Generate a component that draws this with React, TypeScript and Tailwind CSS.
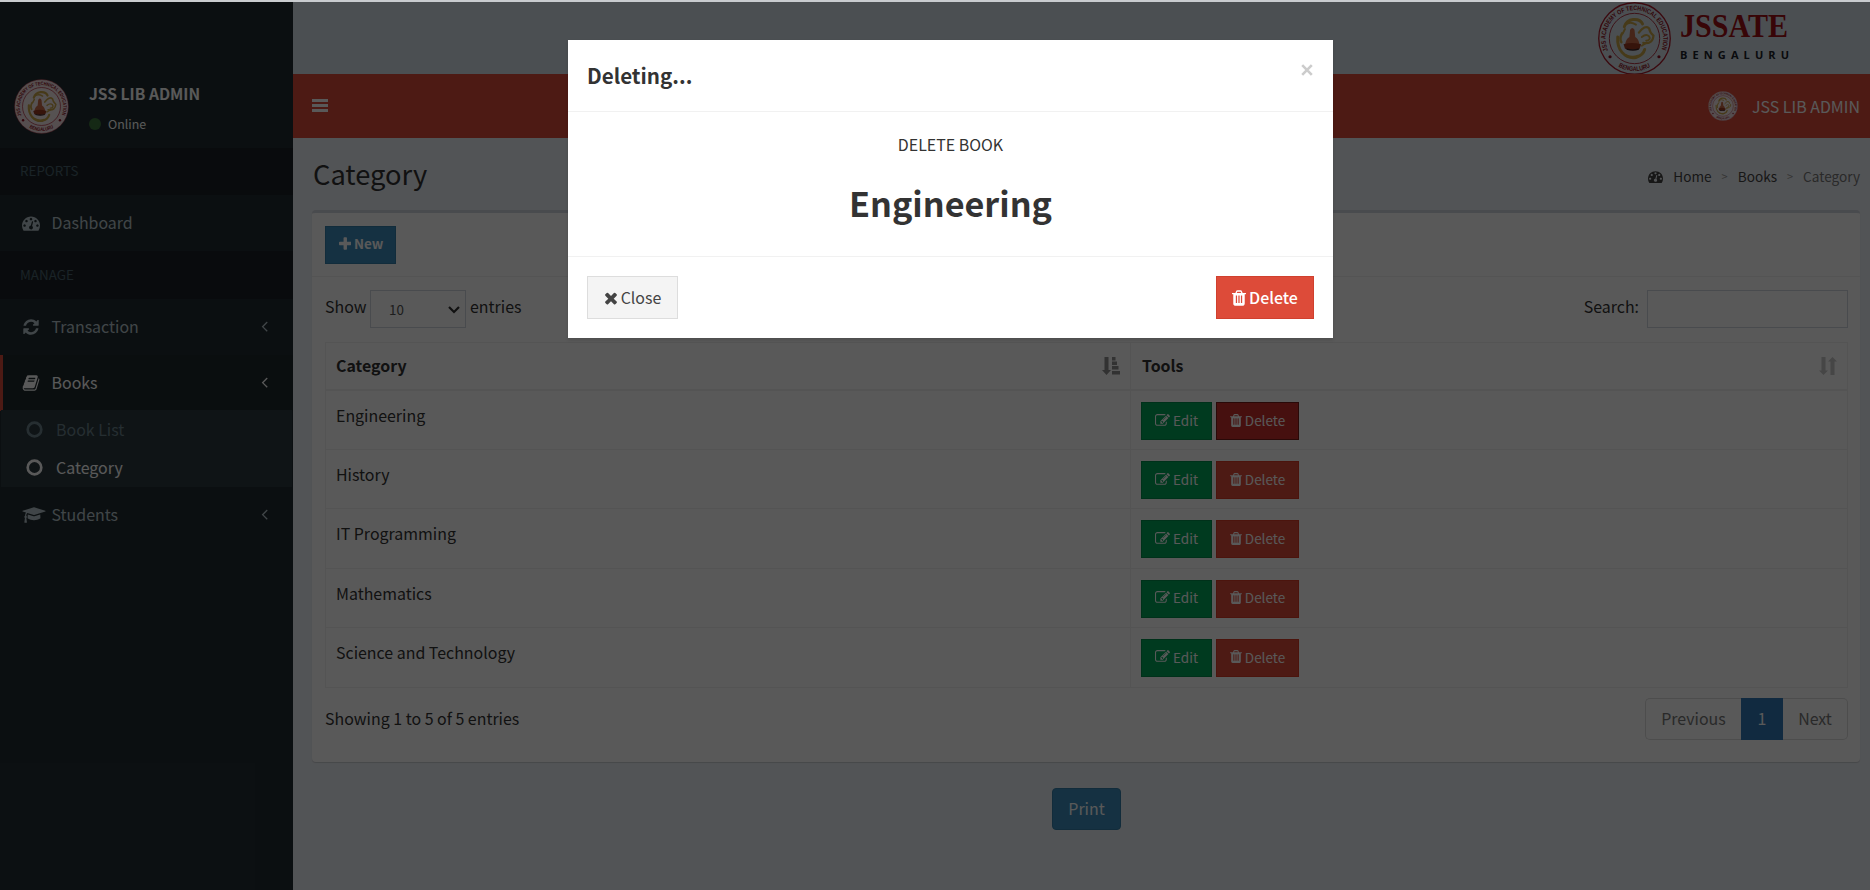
import React from 'react';

type IconProps = { d: string; x?: number; w?: number; className?: string };

const Glyph = ({ d, x = 0, w = 1792, className = '' }: IconProps) => (
  <svg viewBox={`${x} 0 ${w} 1792`} fill="currentColor" className={`shrink-0 ${className}`} aria-hidden="true">
    <path d={d} />
  </svg>
);

const DASHBOARD =
  'M384 1152q0-53-37.5-90.5t-90.5-37.5-90.5 37.5-37.5 90.5 37.5 90.5 90.5 37.5 90.5-37.5 37.5-90.5zm192-448q0-53-37.5-90.5t-90.5-37.5-90.5 37.5-37.5 90.5 37.5 90.5 90.5 37.5 90.5-37.5 37.5-90.5zm428 481l101-382q6-26-7.5-48.5t-38.5-29.5-48 6.5-30 39.5l-101 382q-60 5-107 43.5t-63 98.5q-20 77 20 146t117 89 146-20 89-117q16-60-6-117t-72-91zm660-33q0-53-37.5-90.5t-90.5-37.5-90.5 37.5-37.5 90.5 37.5 90.5 90.5 37.5 90.5-37.5 37.5-90.5zm-640-640q0-53-37.5-90.5t-90.5-37.5-90.5 37.5-37.5 90.5 37.5 90.5 90.5 37.5 90.5-37.5 37.5-90.5zm448 192q0-53-37.5-90.5t-90.5-37.5-90.5 37.5-37.5 90.5 37.5 90.5 90.5 37.5 90.5-37.5 37.5-90.5zm320 448q0 261-141 483-19 29-54 29h-1402q-35 0-54-29-141-221-141-483 0-182 71-348t191-286 286-191 348-71 348 71 286 191 191 286 71 348z';
const REFRESH =
  'M1639 1056q0 5-1 7-64 268-268 434.5t-478 166.5q-146 0-282.5-55t-243.5-157l-129 129q-19 19-45 19t-45-19-19-45v-448q0-26 19-45t45-19h448q26 0 45 19t19 45-19 45l-137 137q71 66 161 102t187 36q134 0 250-65t186-179q11-17 53-117 8-23 30-23h192q13 0 22.5 9.5t9.5 22.5zm25-800v448q0 26-19 45t-45 19h-448q-26 0-45-19t-19-45 19-45l138-138q-148-137-349-137-134 0-250 65t-186 179q-11 17-53 117-8 23-30 23h-199q-13 0-22.5-9.5t-9.5-22.5v-7q65-268 270-434.5t480-166.5q146 0 284 55.5t245 156.5l130-129q19-19 45-19t45 19 19 45z';
const BOOK =
  'M1703 478q40 57 18 129l-275 906q-19 64-76.5 107.5t-122.5 43.5h-923q-77 0-148.5-53.5t-99.5-131.5q-24-67-2-127 0-4 3-27t4-37q1-8-3-21.5t-3-19.5q2-11 8-21t16.5-23.5 16.5-23.5q23-38 45-91.5t30-91.5q3-10 .5-30t-.5-28q3-11 17-28t17-23q21-36 42-92t25-90q1-9-2.5-32t.5-28q4-13 22-30.5t22-22.5q19-26 42.5-84.5t27.5-96.5q1-8-3-25.5t-2-26.5q2-8 9-18t18-23 17-21q8-12 16.5-30.5t15-35 16-36 19.5-32 26.5-23.5 36-11.5 47.5 5.5l-1 3q38-9 51-9h761q74 0 114 56t18 130l-274 906q-36 119-71.5 153.5t-128.5 34.5h-869q-27 0-38 15-11 16-1 43 24 70 144 70h923q29 0 56-15.5t35-41.5l300-987q7-22 5-57 38 15 59 43zm-1064 2q-4 13 2 22.5t20 9.5h608q13 0 25.5-9.5t16.5-22.5l21-64q4-13-2-22.5t-20-9.5h-608q-13 0-25.5 9.5t-16.5 22.5zm-83 256q-4 13 2 22.5t20 9.5h608q13 0 25.5-9.5t16.5-22.5l21-64q4-13-2-22.5t-20-9.5h-608q-13 0-25.5 9.5t-16.5 22.5z';
const CAP =
  'M1774 836l18 316q4 69-82 128t-235 93.5-323 34.5-323-34.5-235-93.5-82-128l18-316 574 181q22 7 48 7t48-7zm530-324q0 23-22 31l-1120 352q-4 1-10 1t-10-1l-652-206q-43 34-71 111.5t-34 178.5q63 36 63 109 0 69-58 107l58 433q2 14-8 25-9 11-24 11h-192q-15 0-24-11-10-11-8-25l58-433q-58-38-58-107 0-73 65-111 11-207 98-330l-333-104q-22-8-22-31t22-31l1120-352q4-1 10-1t10 1l1120 352q22 8 22 31z';
const ANGLE =
  'M1203 544q0 13-10 23l-393 393 393 393q10 10 10 23t-10 23l-50 50q-10 10-23 10t-23-10l-466-466q-10-10-10-23t10-23l466-466q10-10 23-10t23 10l50 50q10 10 10 23z';
const PLUS =
  'M1600 736v192q0 40-28 68t-68 28h-416v416q0 40-28 68t-68 28h-192q-40 0-68-28t-28-68v-416h-416q-40 0-68-28t-28-68v-192q0-40 28-68t68-28h416v-416q0-40 28-68t68-28h192q40 0 68 28t28 68v416h416q40 0 68 28t28 68z';
const CLOSE =
  'M1490 1322q0 40-28 68l-136 136q-28 28-68 28t-68-28l-294-294-294 294q-28 28-68 28t-68-28l-136-136q-28-28-28-68t28-68l294-294-294-294q-28-28-28-68t28-68l136-136q28-28 68-28t68 28l294 294 294-294q28-28 68-28t68 28l136 136q28 28 28 68t-28 68l-294 294 294 294q28 28 28 68z';
const TRASH =
  'M704 1376v-704q0-14-9-23t-23-9h-64q-14 0-23 9t-9 23v704q0 14 9 23t23 9h64q14 0 23-9t9-23zm256 0v-704q0-14-9-23t-23-9h-64q-14 0-23 9t-9 23v704q0 14 9 23t23 9h64q14 0 23-9t9-23zm256 0v-704q0-14-9-23t-23-9h-64q-14 0-23 9t-9 23v704q0 14 9 23t23 9h64q14 0 23-9t9-23zm-544-992h448l-48-117q-7-9-17-11h-317q-10 2-17 11zm928 32v64q0 14-9 23t-23 9h-96v948q0 83-47 143.5t-113 60.5h-832q-66 0-113-58.5t-47-141.5v-952h-96q-14 0-23-9t-9-23v-64q0-14 9-23t23-9h309l70-167q15-37 54-63t79-26h320q40 0 79 26t54 63l70 167h309q14 0 23 9t9 23z';
const EDIT =
  'M888 1184l116-116-152-152-116 116v56h96v96h56zm440-720q-16-16-33 1l-350 350q-17 17-1 33t33-1l350-350q17-17 1-33zm80 594v190q0 119-84.5 203.5t-203.5 84.5h-832q-119 0-203.5-84.5t-84.5-203.5v-832q0-119 84.5-203.5t203.5-84.5h832q63 0 117 25 15 7 18 23 3 17-9 29l-49 49q-14 14-32 8-23-6-45-6h-832q-66 0-113 47t-47 113v832q0 66 47 113t113 47h832q66 0 113-47t47-113v-126q0-13 9-22l64-64q15-15 35-7t20 29zm-96-738l288 288-672 672h-288v-288zm444 132l-92 92-288-288 92-92q28-28 68-28t68 28l152 152q28 28 28 68t-28 68z';

const Seal = ({ id, className, filled = true }: { id: string; className: string; filled?: boolean }) => (
  <svg viewBox="0 0 100 100" className={`shrink-0 overflow-visible ${className}`} aria-hidden="true">
    <defs>
      <path id={`${id}-top`} d="M 14.5 68 A 39.5 39.5 0 1 1 85.5 68" />
      <path id={`${id}-bottom`} d="M 22 84.5 A 44 44 0 0 0 78 84.5" />
    </defs>
    <circle cx="50" cy="50" r="49" fill={filled ? '#f3dfe3' : 'none'} stroke="#a81c2c" strokeWidth={filled ? 0.8 : 1.8} />
    <circle cx="50" cy="50" r="34.5" fill={filled ? '#f7eaec' : 'none'} stroke="#a81c2c" strokeWidth="1.2" />
    <text fontFamily="Liberation Sans" fontWeight="700" fontSize="9" fill="#8e1020">
      <textPath href={`#${id}-top`} startOffset="2" textLength="154" lengthAdjust="spacingAndGlyphs">
        JSS ACADEMY OF TECHNICAL EDUCATION
      </textPath>
    </text>
    <text fontFamily="Liberation Sans" fontWeight="700" fontSize="9" fill="#8e1020">
      <textPath href={`#${id}-bottom`} startOffset="7" textLength="46" lengthAdjust="spacingAndGlyphs">
        BENGALURU
      </textPath>
    </text>
    <circle cx="16.5" cy="75" r="2.2" fill="#8e1020" />
    <circle cx="83.5" cy="75" r="2.2" fill="#8e1020" />
    <g fill="none" stroke="#c9a548" strokeLinecap="round">
      <path d="M36 34q3-9 12-10 10-1 13 6" strokeWidth="4" />
      <path d="M27 48q-1 13 6 21 8 9 19 7 10-3 12-11" strokeWidth="4" />
      <path d="M38 31q6-5 14 0M37 37l-3 6" strokeWidth="2.6" />
      <path d="M56 42q8-11 14-6 1 6 6 10-1 12-14 10" strokeWidth="3" />
      <path d="M60 48q6-5 10-1 3 5-4 6M60 60l6-4" strokeWidth="2.6" />
      <path d="M33 43q-4 7-1 12M38 73q8 4 17 1" strokeWidth="3.4" />
    </g>
    <path d="M44 38q3-5 6 0l1 10q5 3 6 11H37q1-8 6-11z" fill="#c96a48" />
    <path d="M35 58q11-4 24 0l-2 6q-10 3-20 0z" fill="#9c3a22" />
    <path d="M39 63.500q9 2.500 17 0v2q-8 2.500-17 0z" fill="#3a2020" />
  </svg>
);

const NavRow = ({ icon, w = 1792, label, arrow, active }: { icon: string; w?: number; label: string; arrow?: boolean; active?: boolean }) => (
  <div
    className={`flex h-[56.4px] shrink-0 items-center border-l-[3px] pr-[25px] pl-[19px] ${
      active ? 'border-[#dd4b39] bg-[#1e282c] text-white' : 'border-transparent text-[#b8c7ce]'
    }`}
  >
    <span className="flex w-[29.5px] shrink-0">
      <Glyph d={icon} w={w} className={w > 1792 ? 'h-[18px] w-[24px]' : 'h-[18px] w-[18px]'} />
    </span>
    <span className="grow">{label}</span>
    {arrow && <Glyph d={ANGLE} x={576} w={640} className="mt-[-2px] h-[18px] w-[7px]" />}
  </div>
);

const SubRow = ({ label, active }: { label: string; active?: boolean }) => (
  <div className={`flex h-[38.3px] items-center pl-[25px] ${active ? 'text-white' : 'text-[#8aa4af]/70'}`}>
    <svg viewBox="0 0 16 16" className="mr-[13px] h-[17px] w-[17px] shrink-0" fill="none" stroke="currentColor" strokeWidth="2.5">
      <circle cx="8" cy="8" r="6.4" />
    </svg>
    <span>{label}</span>
  </div>
);

const Section = ({ label }: { label: string }) => (
  <div className="flex h-[46.6px] shrink-0 items-center bg-[#1a2226] pb-[2px] pl-[20px] text-[13.4px] text-[#4b646f]">{label}</div>
);

const Sidebar = () => (
  <aside className="flex w-[293px] shrink-0 flex-col bg-[#222d32]">
    <div className="mt-[71px] flex h-[75px] shrink-0 pl-[14px]">
      <Seal id="side" className="mt-[6px] h-[55px] w-[55px]" />
      <div className="ml-[20px] flex flex-col pt-[9px] leading-[22px]">
        <span className="text-[15.6px] font-bold text-white">JSS LIB ADMIN</span>
        <span className="mt-[9px] flex items-center text-[12.4px] text-white">
          <span className="mr-[7px] h-[12px] w-[12px] rounded-full bg-[#3c763d]" />
          Online
        </span>
      </div>
    </div>
    <Section label="REPORTS" />
    <NavRow icon={DASHBOARD} label="Dashboard" />
    <div className="h-px shrink-0 bg-[#1a2226]" />
    <Section label="MANAGE" />
    <NavRow icon={REFRESH} label="Transaction" arrow />
    <NavRow icon={BOOK} label="Books" arrow active />
    <div className="mx-[1px] mt-[-1px] shrink-0 bg-[#2c3b41]">
      <SubRow label="Book List" />
      <SubRow label="Category" active />
    </div>
    <NavRow icon={CAP} w={2304} label="Students" arrow />
  </aside>
);

const Header = () => (
  <>
    <div className="flex h-[72px] shrink-0 justify-end bg-[#d8e2eb] pr-[81px]">
      <Seal id="head" filled={false} className="h-[73px] w-[73px]" />
      <div className="ml-[9px] w-[109px] pt-[8px]">
        <svg viewBox="0 0 109 56" className="h-[56px] w-[109px] overflow-visible">
          <text x="0" y="27" textLength="108" lengthAdjust="spacingAndGlyphs" fontFamily="Liberation Serif" fontWeight="700" fontSize="33" fill="#a00f14">
            JSSATE
          </text>
          <text x="0" y="49" textLength="109" lengthAdjust="spacing" fontFamily="Open Sans" fontWeight="700" fontSize="11" fill="#1c2228">
            BENGALURU
          </text>
        </svg>
      </div>
    </div>
    <nav className="flex h-[64px] shrink-0 items-center bg-[#dd4b39] pr-[10px] pl-[19px] text-white">
      <div className="mb-[1px] flex flex-col gap-[2px]">
        <span className="h-[3px] w-[16px] bg-white" />
        <span className="h-[3px] w-[16px] bg-white" />
        <span className="h-[3px] w-[16px] bg-white" />
      </div>
      <Seal id="nav" className="mr-[14px] ml-auto h-[30px] w-[30px]" />
      <span className="pt-[2px]">JSS LIB ADMIN</span>
    </nav>
  </>
);

const TitleBar = () => (
  <div className="flex h-[72px] shrink-0 items-center justify-between pr-[10px] pl-[20px]">
    <h1 className="pb-[2px] text-[27.3px] text-[#333]">Category</h1>
    <ol className="flex items-center pt-[5px] text-[13.6px] text-[#444]">
      <Glyph d={DASHBOARD} className="mr-[10px] h-[15px] w-[15px]" />
      <li>Home</li>
      <li className="mx-[10px] text-[11px] text-[#999]">&gt;</li>
      <li>Books</li>
      <li className="mx-[10px] text-[11px] text-[#999]">&gt;</li>
      <li className="text-[#777]">Category</li>
    </ol>
  </div>
);

const rows = ['Engineering', 'History', 'IT Programming', 'Mathematics', 'Science and Technology'];

const SortAsc = () => (
  <svg viewBox="0 0 18 18" className="h-[18px] w-[18px] text-[#8f8f8f]" fill="currentColor">
    <path d="M2.500 0h4v13h2.500l-4.500 5-4.500-5h2.500z" />
    <path d="M10 0h3.500v3.500h-3.500zM10 4.500h5v3.500h-5zM10 9h6.500v3.500h-6.500zM10 14h8v3.500h-8z" />
  </svg>
);

const SortBoth = () => (
  <svg viewBox="0 0 18 18" className="h-[18px] w-[18px] text-[#c8c8c8]" fill="currentColor">
    <path d="M2.500 0h4v13.500h2.500l-4.500 4.500-4.500-4.500h2.500zM11.500 18h4v-13.500h2.500l-4.500-4.500-4.500 4.500h2.500z" />
  </svg>
);

const TableCard = () => (
  <div className="mr-[10px] ml-[19px] flex h-[552px] shrink-0 flex-col rounded-[4px] border-t-[3px] border-[#d2d6de] bg-white shadow-[0_1px_1px_rgba(0,0,0,0.15)]">
    <div className="flex h-[64px] shrink-0 items-start border-b border-[#f0f0f0] px-[13px] pt-[13px]">
      <button className="flex h-[38px] w-[71px] items-center justify-center gap-[3px] border border-[#367fa9] bg-[#3c8dbc] pb-[3px] pl-[1px] text-[13.4px] font-bold text-white">
        <Glyph d={PLUS} x={192} w={1408} className="h-[16px] w-[12.500px]" />
        New
      </button>
    </div>
    <div className="flex flex-col pt-[13px] pr-[12px] pl-[13px]">
      <div className="flex items-start justify-between text-[#333]">
        <div className="flex">
          <span className="w-[45px] leading-[33px]">Show</span>
          <div className="flex h-[38px] w-[96px] items-center justify-between border border-[#d2d6de] pr-[5px] pl-[18px] text-[13.4px] text-[#555]">
            <span>10</span>
            <svg viewBox="0 0 12 8" className="mt-[2px] h-[8px] w-[12px]" fill="none" stroke="#333" strokeWidth="2.2">
              <path d="M1 1l5 5 5-5" />
            </svg>
          </div>
          <span className="ml-[4px] leading-[33px]">entries</span>
        </div>
        <div className="flex">
          <span className="mr-[8px] leading-[33px]">Search:</span>
          <div className="h-[38px] w-[201px] border border-[#d2d6de]" />
        </div>
      </div>
      <div className="mt-[14px] border border-[#f0f0f0] text-[#333]">
        <div className="flex h-[48px] border-b-2 border-[#f0f0f0] font-bold">
          <div className="flex w-[805px] items-center justify-between border-r border-[#f0f0f0] pr-[10px] pl-[10px]">
            Category
            <SortAsc />
          </div>
          <div className="flex grow items-center justify-between pr-[10px] pl-[11px]">
            Tools
            <SortBoth />
          </div>
        </div>
        {rows.map((name, i) => (
          <div key={name} className="flex h-[59.2px] border-b border-[#f0f0f0] last:border-b-0">
            <div className="w-[805px] border-r border-[#f0f0f0] pt-[11px] pl-[10px] leading-[26px]">{name}</div>
            <div className="flex items-start gap-[4px] pt-[11px] pl-[10px] text-[13.5px] text-white">
              <button className="flex h-[38px] w-[71px] items-center justify-center gap-[3px] border border-[#008d4c] bg-[#00a65a] pb-[2px]">
                <Glyph d={EDIT} className="h-[15px] w-[15px]" />
                Edit
              </button>
              <button
                className={`flex h-[38px] w-[83px] items-center justify-center gap-[3px] border pb-[2px] ${
                  i === 0 ? 'border-[#761c19] bg-[#c9302c]' : 'border-[#d73925] bg-[#dd4b39]'
                }`}
              >
                <Glyph d={TRASH} x={192} w={1408} className="h-[15px] w-[12px]" />
                Delete
              </button>
            </div>
          </div>
        ))}
      </div>
      <div className="mt-[10px] flex items-start justify-between">
        <span className="pt-[7px] leading-[26px] text-[#333]">Showing 1 to 5 of 5 entries</span>
        <div className="flex h-[42px] w-[203px] items-stretch text-[#777]">
          <span className="flex w-[96px] items-center justify-center rounded-l-[5px] border border-r-0 border-[#ddd]">Previous</span>
          <span className="flex w-[42px] items-center justify-center bg-[#337ab7] text-white">1</span>
          <span className="flex grow items-center justify-center rounded-r-[5px] border border-l-0 border-[#ddd]">Next</span>
        </div>
      </div>
    </div>
  </div>
);

const Modal = () => (
  <div className="absolute inset-x-0 top-[2px] bottom-0 flex items-start justify-center bg-black/65 pt-[38px] pl-[31px]">
    <div className="flex h-[298px] w-[765px] flex-col bg-white shadow-[0_2px_3px_rgba(0,0,0,0.125)]">
      <div className="flex h-[72px] items-start justify-between border-b border-[#f1f1f1] px-[19px] text-[#333]">
        <h4 className="pt-[20px] text-[20.6px] leading-[30px] font-bold">Deleting...</h4>
        <svg viewBox="0 0 12 12" className="mt-[24px] mr-[1px] h-[12px] w-[12px]" stroke="#ccc" strokeWidth="2.6" fill="none">
          <path d="M1.200 1.200l9.600 9.600M10.800 1.200l-9.600 9.600" />
        </svg>
      </div>
      <div className="flex h-[145px] flex-col items-center border-b border-[#f1f1f1] pt-[19px] text-[#333]">
        <p className="leading-[26px]">DELETE BOOK</p>
        <h2 className="mt-[24px] text-[34.2px] leading-[42px] font-bold">Engineering</h2>
      </div>
      <div className="flex justify-between px-[19px] pt-[19px]">
        <button className="flex h-[43px] w-[91px] items-center justify-center gap-[3px] border border-[#ddd] bg-[#f4f4f4] text-[#444]">
          <Glyph d={CLOSE} x={192} w={1408} className="h-[18px] w-[14px]" />
          Close
        </button>
        <button className="flex h-[43px] w-[98px] items-center justify-center gap-[3px] border border-[#d0402e] bg-[#dd4b39] font-medium text-white">
          <Glyph d={TRASH} x={192} w={1408} className="h-[18px] w-[14px]" />
          Delete
        </button>
      </div>
    </div>
  </div>
);

export default function App() {
  return (
    <div className="relative flex h-[890px] w-[1870px] flex-col overflow-hidden bg-[#ecf0f5] font-['Noto_Sans_CJK_SC',sans-serif] text-[15.95px]">
      <div className="h-[2px] shrink-0 bg-[#c9cccf]" />
      <div className="flex min-h-0 grow">
        <Sidebar />
        <main className="flex min-w-0 grow flex-col">
          <Header />
          <TitleBar />
          <TableCard />
          <button className="mt-[26px] ml-[759px] flex h-[42px] w-[69px] shrink-0 items-center justify-center rounded-[4px] border border-[#367fa9] bg-[#3c8dbc] text-white">
            Print
          </button>
        </main>
      </div>
      <Modal />
    </div>
  );
}
